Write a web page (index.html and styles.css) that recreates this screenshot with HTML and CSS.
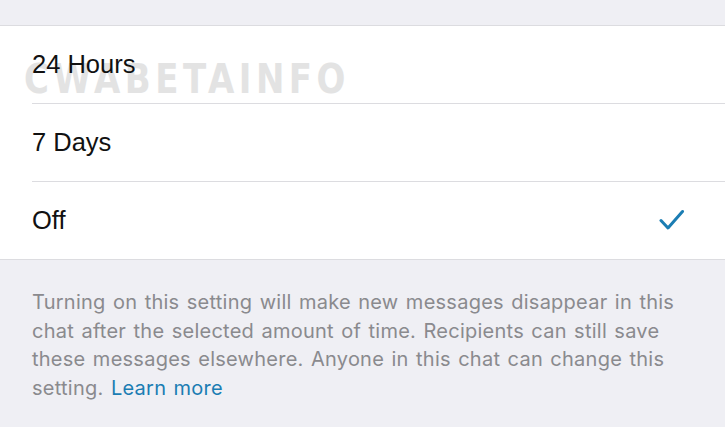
FILE: index.html
```html
<!DOCTYPE html>
<html>
<head>
<meta charset="utf-8">
<link rel="stylesheet" href="styles.css">
</head>
<body>
<div class="screen">
  <div class="top-band"></div>
  <div class="options">
    <div class="watermark">CWABETAINFO</div>
    <div class="row"><div class="row-inner"><span class="label">24 Hours</span></div></div>
    <div class="row"><div class="row-inner"><span class="label">7 Days</span></div></div>
    <div class="row"><div class="row-inner last"><span class="label">Off</span>
      <svg class="check" width="26" height="22" viewBox="0 0 26 22"><path d="M2 11.5 L9 19 L23.5 2.5" fill="none" stroke="#1b7db3" stroke-width="3" stroke-linecap="round" stroke-linejoin="round"/></svg>
    </div></div>
  </div>
  <p class="footer">Turning on this setting will make new messages disappear in this chat after the selected amount of time. Recipients can still save these messages elsewhere. Anyone in this chat can change this setting. <a class="link">Learn more</a></p>
</div>
</body>
</html>
```
FILE: styles.css
```css
html, body {
  margin: 0;
  padding: 0;
  background: #efeff4;
}
.screen {
  width: 725px;
  height: 427px;
  overflow: hidden;
  background: #efeff4;
  font-family: "Liberation Sans", Arial, sans-serif;
}
.top-band {
  height: 25px;
  border-bottom: 1px solid #dcdce0;
}
.options {
  position: relative;
  background: #fff;
}
.watermark {
  position: absolute;
  left: 24px;
  top: 34.5px;
  font-family: "DejaVu Sans", sans-serif;
  font-weight: 900;
  font-size: 34px;
  letter-spacing: 4.5px;
  color: #e3e3e3;
  transform: scaleY(1.2);
  transform-origin: left 31.6px;
  pointer-events: none;
}
.row {
  position: relative;
  padding-left: 32px;
}
.row-inner {
  height: 77px;
  border-bottom: 1px solid #dcdce0;
  display: flex;
  align-items: center;
  justify-content: space-between;
  padding-right: 40px;
}
.row-inner.last {
  border-bottom: none;
}
.row:last-child {
  border-bottom: 1px solid #dcdce0;
}
.label {
  position: relative;
  font-size: 25.5px;
  color: #111;
}
.check {
  margin-top: -1px;
}
.footer {
  margin: 0;
  padding: 28px 30px 0 32px;
  font-family: Inter, "Liberation Sans", sans-serif;
  font-size: 20px;
  letter-spacing: 0.25px;
  word-spacing: 1.5px;
  line-height: 28.5px;
  color: #8a8a8e;
}
.link {
  color: #1b7db3;
}
```
